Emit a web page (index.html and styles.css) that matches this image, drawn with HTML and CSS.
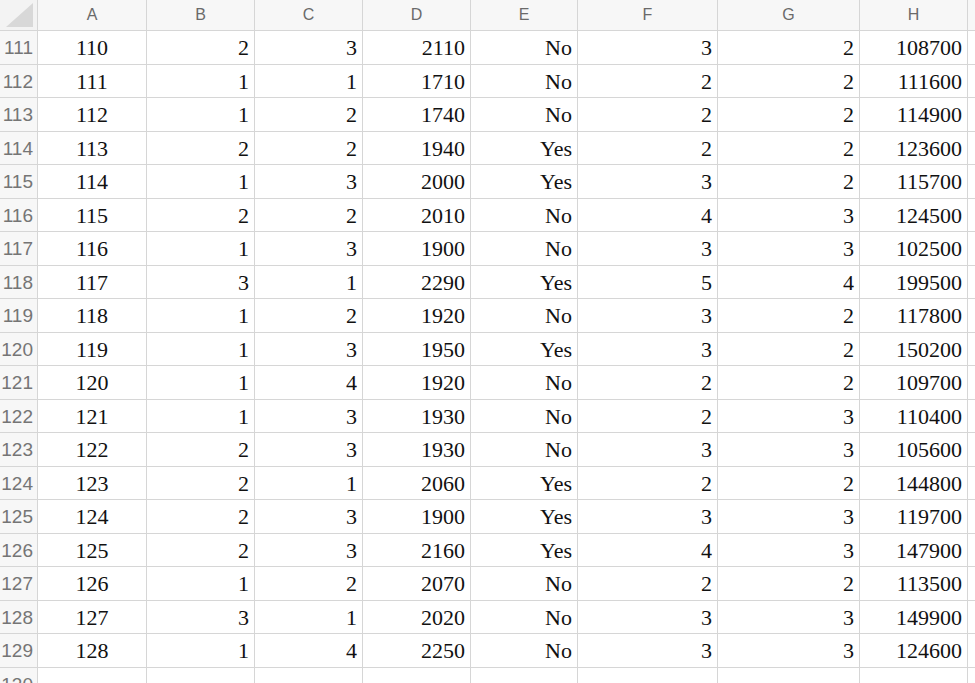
FILE: index.html
```html
<!DOCTYPE html>
<html>
<head>
<meta charset="utf-8">
<link rel="stylesheet" href="styles.css">
</head>
<body>
<div class="sheet" id="sheet">
  <div class="corner"><svg class="tri" width="37" height="30" viewBox="0 0 37 30"><polygon points="6,27 33,27 33,3" fill="#d8d8d8"/></svg></div>
  <div class="colhead">A</div><div class="colhead">B</div><div class="colhead">C</div><div class="colhead">D</div><div class="colhead">E</div><div class="colhead">F</div><div class="colhead">G</div><div class="colhead">H</div><div class="colhead last"></div>
</div>
<script src="app.js"></script>
</body>
</html>
```

FILE: app.js
```js
const data = [
[110,2,3,2110,"No",3,2,108700],
[111,1,1,1710,"No",2,2,111600],
[112,1,2,1740,"No",2,2,114900],
[113,2,2,1940,"Yes",2,2,123600],
[114,1,3,2000,"Yes",3,2,115700],
[115,2,2,2010,"No",4,3,124500],
[116,1,3,1900,"No",3,3,102500],
[117,3,1,2290,"Yes",5,4,199500],
[118,1,2,1920,"No",3,2,117800],
[119,1,3,1950,"Yes",3,2,150200],
[120,1,4,1920,"No",2,2,109700],
[121,1,3,1930,"No",2,3,110400],
[122,2,3,1930,"No",3,3,105600],
[123,2,1,2060,"Yes",2,2,144800],
[124,2,3,1900,"Yes",3,3,119700],
[125,2,3,2160,"Yes",4,3,147900],
[126,1,2,2070,"No",2,2,113500],
[127,3,1,2020,"No",3,3,149900],
[128,1,4,2250,"No",3,3,124600]
];
const sheet = document.getElementById('sheet');
let html = '';
data.forEach((r, i) => {
  html += '<div class="rowhead">' + (111 + i) + '</div>';
  r.forEach((v, j) => {
    html += '<div class="cell' + (j === 0 ? ' center' : '') + '">' + v + '</div>';
  });
  html += '<div class="cell last"></div>';
});
html += '<div class="rowhead">130</div>';
for (let j = 0; j < 9; j++) html += '<div class="cell' + (j === 8 ? ' last' : '') + '"></div>';
sheet.insertAdjacentHTML('beforeend', html);
```

FILE: styles.css
```css
html, body {
  margin: 0;
  padding: 0;
  background: #ffffff;
  overflow: hidden;
}
.sheet {
  display: grid;
  grid-template-columns: 38px 109px 108px 108px 108px 107px 140px 142px 108px 1fr;
  grid-template-rows: 31px repeat(20, 33.5px);
  width: 975px;
}
.sheet > div {
  box-sizing: border-box;
  border-right: 1px solid #d6d6d6;
  border-bottom: 1px solid #d6d6d6;
  overflow: hidden;
  white-space: nowrap;
}
.corner {
  background: #f3f3f3;
}
.tri {
  display: block;
}
.colhead {
  background: #f7f7f7;
  color: #6a6a6a;
  font-family: "Liberation Sans", Arial, sans-serif;
  font-size: 16px;
  text-align: center;
  line-height: 30px;
}
.rowhead {
  background: #f7f7f7;
  color: #757575;
  font-family: "Liberation Sans", Arial, sans-serif;
  font-size: 19px;
  display: flex;
  align-items: center;
  justify-content: flex-end;
  padding-right: 4px;
  padding-top: 2px;
}
.cell {
  font-family: "Liberation Serif", "Times New Roman", serif;
  font-size: 22px;
  color: #111;
  display: flex;
  align-items: center;
  justify-content: flex-end;
  padding-right: 5px;
  padding-top: 2px;
}
.cell.center {
  justify-content: center;
  padding-right: 0;
}
.last {
  border-right: none !important;
}
```
